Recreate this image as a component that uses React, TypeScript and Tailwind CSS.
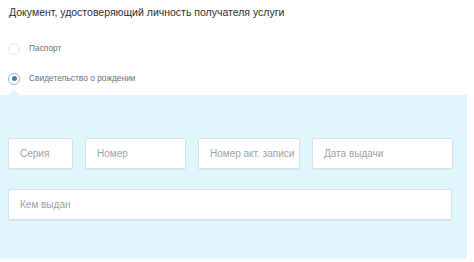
export default function App() {
  return (
    <div className="w-[474px] h-[262px] bg-white overflow-hidden font-['Liberation_Sans',Arial,sans-serif]">
      <div className="pl-[9px] pt-[5px] text-[10.5px] leading-[14px] text-[#2b2f33]">
        Документ, удостоверяющий личность получателя услуги
      </div>

      <div className="mt-[23px] flex flex-col gap-[17px] pl-[8px]">
        <label className="flex items-center gap-[9px] h-[13px]">
          <span className="w-[12px] h-[12px] rounded-full border border-[#e3e6e9] bg-white" />
          <span className="text-[8.4px] text-[#6b7379]">Паспорт</span>
        </label>
        <label className="flex items-center gap-[9px] h-[13px]">
          <span className="w-[12px] h-[12px] rounded-full border border-[#9fb3c0] bg-white flex items-center justify-center">
            <span className="w-[5px] h-[5px] rounded-full bg-[#3d7fa8]" />
          </span>
          <span className="text-[8.4px] text-[#6b7379]">Свидетельство о рождении</span>
        </label>
      </div>

      <div className="relative mt-[10px] w-[467px] h-[164px] bg-[#e1f5fd] pt-[43px] px-[8px]">
        <span className="absolute left-[8px] top-[-6px] w-0 h-0 border-l-[6px] border-r-[6px] border-b-[6px] border-l-transparent border-r-transparent border-b-[#e1f5fd]" />
        <div className="flex gap-[12px]">
          <Field label="Серия" w="w-[65px]" />
          <Field label="Номер" w="w-[101px]" />
          <Field label="Номер акт. записи" w="w-[102px]" />
          <Field label="Дата выдачи" w="w-[141px]" />
        </div>
        <div className="mt-[20px]">
          <Field label="Кем выдан" w="w-[444px]" />
        </div>
      </div>
    </div>
  );
}

function Field({ label, w }: { label: string; w: string }) {
  return (
    <div
      className={`${w} h-[31px] bg-white border border-[#d9e0e5] rounded-[2px] shadow-[0_1px_1px_rgba(0,0,0,0.05)] flex items-center px-[11px] text-[10px] text-[#9aa3aa] whitespace-nowrap overflow-hidden`}
    >
      {label}
    </div>
  );
}
